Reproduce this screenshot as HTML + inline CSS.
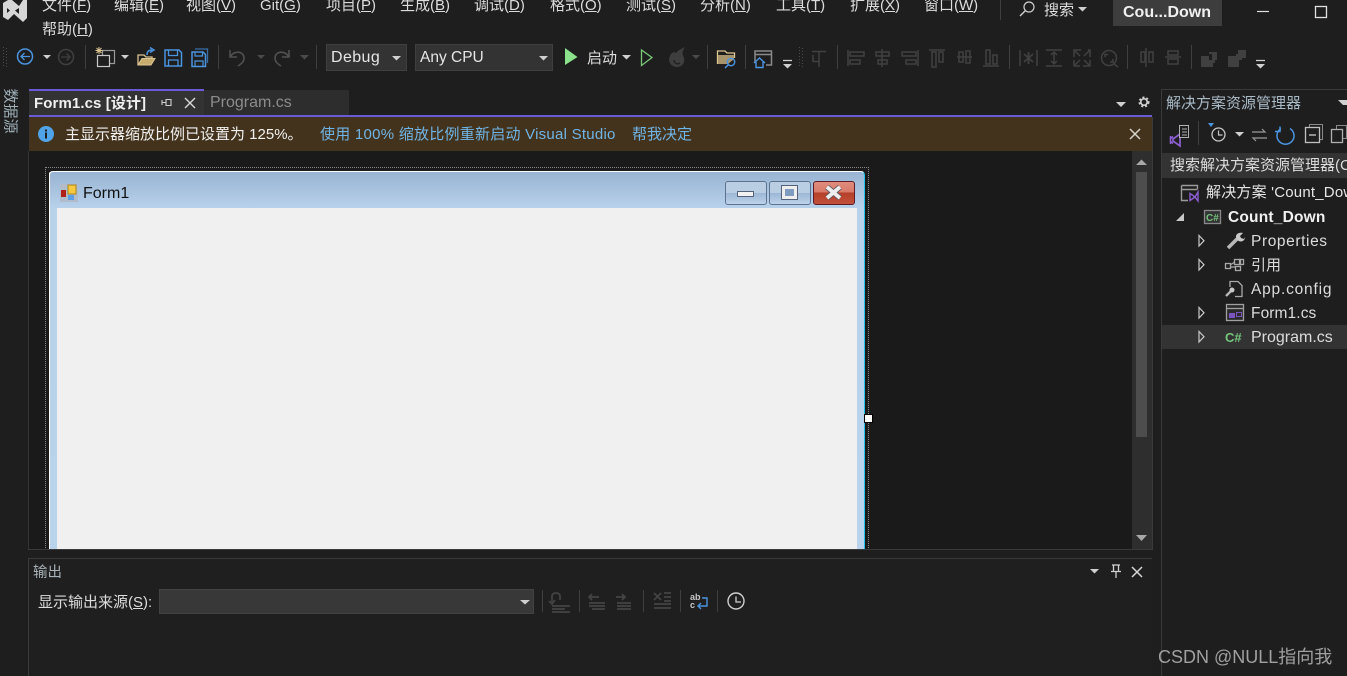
<!DOCTYPE html>
<html><head><meta charset="utf-8">
<style>
html,body{margin:0;padding:0;background:#1e1e1e;width:1347px;height:676px;overflow:hidden}
body{position:relative;font-family:"Liberation Sans","Noto Sans CJK SC",sans-serif;font-size:15px;color:#dcdcdc}
.t{position:absolute;white-space:nowrap;line-height:20px;height:20px}
.b{position:absolute}
u{text-underline-offset:1px}
svg{position:absolute;left:0;top:0}
</style></head><body>

<!-- panels -->
<div class="b" style="left:0;top:0;width:1347px;height:676px;background:#1e1e1e"></div>
<div class="b" style="left:29px;top:151px;width:1103px;height:398px;background:#1a1a1a"></div>
<div class="b" style="left:1132px;top:151px;width:20px;height:398px;background:#2e2e2e"></div>
<div class="b" style="left:1136px;top:172px;width:11px;height:265px;background:#4d4d4d"></div>
<div class="b" style="left:28px;top:151px;width:1px;height:398px;background:#333"></div>
<div class="b" style="left:1152px;top:117px;width:1px;height:433px;background:#3a3a3a"></div>

<!-- tabs -->
<div class="b" style="left:29px;top:89px;width:175px;height:26px;background:#333;border-top:2px solid #6b5ad6;box-sizing:border-box"></div>
<div class="b" style="left:204px;top:90px;width:145px;height:25px;background:#2d2d2d"></div>
<div class="b" style="left:29px;top:115px;width:1123px;height:2px;background:#6b5ad6"></div>
<div class="t" style="left:34px;top:94px;font-weight:bold;color:#f0f0f0;font-size:15px;letter-spacing:.1px">Form1.cs [设计]</div>
<div class="t" style="left:210px;top:93px;color:#8c8c8c;font-size:16px">Program.cs</div>

<!-- info bar -->
<div class="b" style="left:29px;top:117px;width:1123px;height:34px;background:#44331c"></div>
<div class="t" style="left:65px;top:125px;color:#f0f0f0;font-size:15px">主显示器缩放比例已设置为 125%。</div>
<div class="t" style="left:320px;top:125px;color:#6fb4e6;font-size:15px;letter-spacing:.25px">使用 100% 缩放比例重新启动 Visual Studio</div>
<div class="t" style="left:632px;top:125px;color:#6fb4e6;font-size:15px">帮我决定</div>

<!-- form designer -->
<div class="b" style="left:45px;top:167px;width:822px;height:382px;border:1px dotted #8a8a8a;border-bottom:none"></div>
<div class="b" style="left:49px;top:171px;width:816px;height:378px;background:linear-gradient(#98b4d2 0,#b9d2ec 37px,#b9d3ec 100%);border-top:1px solid #fff;border-left:1px solid #fff;border-right:1px solid #1ec1ee;border-radius:4px 4px 0 0;box-sizing:border-box"></div>
<div class="b" style="left:57px;top:208px;width:800px;height:341px;background:#f0f0f0"></div>
<div class="t" style="left:83px;top:184px;color:#111;font-size:16px">Form1</div>
<div class="b" style="left:864px;top:414px;width:7px;height:7px;background:#fff;border:1px solid #000"></div>
<div class="b" style="left:28px;top:549px;width:1125px;height:1px;background:#3a3a3a"></div>

<!-- window buttons -->
<div class="b" style="left:725px;top:181px;width:42px;height:24px;box-sizing:border-box;border:1px solid #5f7390;border-radius:3px;background:linear-gradient(#b9cde3 0,#b9cde3 50%,#9cb6d4 50%,#bcd3ea 100%)"></div>
<div class="b" style="left:737px;top:191px;width:17px;height:6px;background:#f2f2f2;border:1px solid #53627a;box-sizing:border-box"></div>
<div class="b" style="left:769px;top:181px;width:42px;height:24px;box-sizing:border-box;border:1px solid #5f7390;border-radius:3px;background:linear-gradient(#b9cde3 0,#b9cde3 50%,#9cb6d4 50%,#bcd3ea 100%)"></div>
<div class="b" style="left:781px;top:185px;width:17px;height:15px;box-sizing:border-box;background:#7f9cc0;border:4px solid #eee;outline:1px solid #53627a;outline-offset:-1px"></div>
<div class="b" style="left:813px;top:181px;width:42px;height:24px;box-sizing:border-box;border:1px solid #5c1c28;border-radius:3px;background:linear-gradient(#e08c7c 0,#d97b6b 45%,#b5402a 50%,#c2503a 100%)"></div>

<!-- menu -->
<div class="t" style="left:42px;top:-4px">文件(<u>F</u>)</div>
<div class="t" style="left:114px;top:-4px">编辑(<u>E</u>)</div>
<div class="t" style="left:186px;top:-4px">视图(<u>V</u>)</div>
<div class="t" style="left:260px;top:-4px">Git(<u>G</u>)</div>
<div class="t" style="left:326px;top:-4px">项目(<u>P</u>)</div>
<div class="t" style="left:400px;top:-4px">生成(<u>B</u>)</div>
<div class="t" style="left:474px;top:-4px">调试(<u>D</u>)</div>
<div class="t" style="left:550px;top:-4px">格式(<u>O</u>)</div>
<div class="t" style="left:626px;top:-4px">测试(<u>S</u>)</div>
<div class="t" style="left:700px;top:-4px">分析(<u>N</u>)</div>
<div class="t" style="left:776px;top:-4px">工具(<u>T</u>)</div>
<div class="t" style="left:850px;top:-4px">扩展(<u>X</u>)</div>
<div class="t" style="left:924px;top:-4px">窗口(<u>W</u>)</div>
<div class="t" style="left:42px;top:20px">帮助(<u>H</u>)</div>
<div class="t" style="left:1044px;top:1px">搜索</div>
<div class="b" style="left:1113px;top:0;width:109px;height:26px;background:#3d3d3d"></div>
<div class="t" style="left:1123px;top:3px;font-weight:bold;color:#f0f0f0;font-size:16px">Cou...Down</div>

<!-- toolbar combos -->
<div class="b" style="left:326px;top:44px;width:81px;height:27px;box-sizing:border-box;background:#333;border:1px solid #3f3f3f"></div>
<div class="t" style="left:331px;top:48px;font-size:16px;color:#e6e6e6;letter-spacing:.4px">Debug</div>
<div class="b" style="left:415px;top:44px;width:138px;height:27px;box-sizing:border-box;background:#333;border:1px solid #3f3f3f"></div>
<div class="t" style="left:420px;top:48px;font-size:15.500px;color:#e6e6e6">Any CPU</div>
<div class="t" style="left:587px;top:49px;color:#dcdcdc">启动</div>

<!-- left tab -->
<div class="t" style="left:-14px;top:101px;font-size:15px;color:#9fb0b8;transform:rotate(90deg);width:47px;text-align:center">数据源</div>

<!-- solution explorer -->
<div class="b" style="left:1161px;top:89px;width:1px;height:587px;background:#3a3a3a"></div>
<div class="b" style="left:1161px;top:89px;width:186px;height:1px;background:#3a3a3a"></div>
<div class="t" style="left:1166px;top:94px;font-size:15px;color:#a9bac6">解决方案资源管理器</div>
<div class="b" style="left:1162px;top:153px;width:185px;height:25px;background:#333"></div>
<div class="b" style="left:1162px;top:325px;width:185px;height:24px;background:#333"></div>
<div class="b" style="left:1162px;top:150px;width:185px;height:66px;overflow:hidden">
<div class="t" style="left:8px;top:6px;font-size:15px;color:#dcdcdc">搜索解决方案资源管理器(Ctrl+;)</div>
<div class="t" style="left:44px;top:33px;color:#e6e6e6;font-size:15px;letter-spacing:.2px">解决方案 'Count_Down' (1 个项目)</div>
</div>
<div class="t" style="left:1228px;top:208px;color:#f0f0f0;font-weight:bold;font-size:15.500px;letter-spacing:.2px">Count_Down</div>
<div class="t" style="left:1251px;top:232px;color:#dcdcdc;font-size:15.500px;letter-spacing:.6px">Properties</div>
<div class="t" style="left:1251px;top:256px;color:#dcdcdc;font-size:15px">引用</div>
<div class="t" style="left:1251px;top:280px;color:#dcdcdc;font-size:15.500px;letter-spacing:.8px">App.config</div>
<div class="t" style="left:1251px;top:304px;color:#dcdcdc;font-size:15.500px;letter-spacing:.1px">Form1.cs</div>
<div class="t" style="left:1251px;top:328px;color:#dcdcdc;font-size:16px">Program.cs</div>

<!-- output -->
<div class="b" style="left:28px;top:558px;width:1124px;height:118px;background:#1f1f1f;border-top:1px solid #3a3a3a;border-left:1px solid #3a3a3a;box-sizing:border-box"></div>
<div class="t" style="left:33px;top:563px;font-size:14.500px;color:#a6b0b6">输出</div>
<div class="t" style="left:38px;top:593px;font-size:15px;color:#dcdcdc">显示输出来源(<u>S</u>):</div>
<div class="b" style="left:159px;top:589px;width:375px;height:25px;box-sizing:border-box;background:#383838;border:1px solid #424242"></div>
<div class="t" style="left:1158px;top:647px;font-size:18px;color:#a0a0a0">CSDN @NULL指向我</div>

<!-- icons -->
<svg width="1347" height="676" viewBox="0 0 1347 676" fill="none">
<!-- VS logo -->
<path d="M3 3 8 0H12L19 6 23 0H27V18L23 22 14 14 8 20 3 17ZM7 8V13L10 10.500ZM19 8 15 10.500 19 14Z" fill="#d6d6d6" fill-rule="evenodd"/>
<!-- separators -->
<g stroke="#3f3f3f">
<path d="M1000.500 0V20M85.500 45V69M218.500 45V69M316.500 45V69M707.500 45V69M745.500 45V69M837.500 45V69M1009.500 45V69M1127.500 45V69M1191.500 45V69M1198.500 121V145M542.500 590V612M579.500 590V612M643.500 590V612M680.500 590V612M717.500 590V612"/>
</g>
<!-- grips -->
<g stroke="#4a4a4a" stroke-dasharray="1 2"><path d="M3.500 47V68M6.500 48V68M799.500 47V68M802.500 48V68"/></g>
<!-- triangles -->
<g fill="#d0d0d0">
<path d="M1078 7h9l-4.500 4.500zM43 55h8l-4 4zM121 55h8l-4 4zM392 56h9l-4.500 4.500zM539 56h9l-4.500 4.500zM622 55h9l-4.500 4.500zM1116 102h10l-5 5zM1338 100h9v5l-4 0zM1235 132h9l-4.500 4.500zM1090 569h9l-4.500 4.500zM520 600h10l-5 4.500z"/>
<path d="M783 64h9l-4.500 4.500z"/><path d="M783 60.500h9" stroke="#d0d0d0" stroke-width="1.300"/>
<path d="M1256 64h9l-4.500 4.500z"/><path d="M1256 60.500h9" stroke="#d0d0d0" stroke-width="1.300"/>
</g>
<g fill="#4a4a4a"><path d="M257 55h8l-4 4zM300 55h9l-4.500 4.500zM692 55h8l-4 4z"/></g>
<!-- search + window controls -->
<circle cx="1029" cy="7" r="5" stroke="#d0d0d0" stroke-width="1.200"/><path d="M1025 11 1020 16" stroke="#d0d0d0" stroke-width="1.400"/>
<path d="M1257 11.500H1269" stroke="#e0e0e0" stroke-width="1.200"/>
<rect x="1315.500" y="6.500" width="11" height="11" stroke="#e0e0e0" stroke-width="1.300"/>
<!-- back/forward -->
<circle cx="25" cy="56.500" r="7.500" stroke="#4a94e0" stroke-width="1.500"/><path d="M30 56.500H21M24.500 53 21 56.500 24.500 60" stroke="#4a94e0" stroke-width="1.300"/>
<circle cx="66" cy="57" r="7.500" stroke="#3f3f3f" stroke-width="1.500"/><path d="M61 57H70M66.500 53.500 70 57 66.500 60.500" stroke="#3f3f3f" stroke-width="1.300"/>
<!-- new project -->
<rect x="102.500" y="50.500" width="12" height="13" stroke="#9a9a9a" stroke-width="1.200"/>
<rect x="97.500" y="55.500" width="12" height="11" fill="#1e1e1e" stroke="#c8c8c8" stroke-width="1.200"/>
<path d="M99 47V54M95.500 50.500H102.500M96.500 48 101.500 53M101.500 48 96.500 53" stroke="#dcc58f"/>
<!-- open -->
<path d="M138 65V55H144L146 57H152V59" stroke="#dcc58f" stroke-width="1.300"/><path d="M138 65H151L155 58.500H142Z" fill="#c7ac6f" stroke="#dcc58f"/>
<path d="M147 55C147 51 149 50 152 50M150 47.500 154 50 150 52.500" stroke="#4a94e0" stroke-width="1.500"/>
<!-- save -->
<path d="M165 50H179L181.500 52.500V66H165Z" stroke="#4a94e0" stroke-width="1.500"/><path d="M168.500 50V55.500H177.500V50M168.500 66V60H178V66" stroke="#4a94e0" stroke-width="1.300"/>
<path d="M195 49H207.500V63" stroke="#3a6ea6" stroke-width="1.300"/>
<path d="M192 52H203L205.500 54.500V66.500H192Z" stroke="#4a94e0" stroke-width="1.500"/><path d="M195 52V56H202.500V52M195 66.500V61H203V66.500" stroke="#4a94e0" stroke-width="1.200"/>
<!-- undo/redo -->
<path d="M230 50V57H237M230.500 56.500C234 50 244 51 244 58C244 62 241 64 238 66" stroke="#505050" stroke-width="1.600"/>
<path d="M289 50V57H282M288.500 56.500C285 50 275 51 275 58C275 62 278 64 281 66" stroke="#505050" stroke-width="1.600"/>
<!-- play -->
<path d="M565 48 577.500 57 565 65Z" fill="#8ae28a"/>
<path d="M641.500 50V65.500L652 57.500Z" stroke="#78c878" stroke-width="1.300"/>
<!-- flame -->
<path d="M685 47C678 50 677 52 676 53 674 51 671 53 670 56 667 62 672 67 677 67 683 67 685 62 684 58 683 55 681 53 685 47Z" fill="#3e3e3e"/><path d="M674 60C674 63 677 65 680 63" stroke="#222" stroke-width="1.500"/>
<!-- folder search -->
<path d="M717.500 64V51H725L727 53H734.500V58" stroke="#dcc58f" stroke-width="1.300"/><path d="M718 55H734V59L728 64H718Z" fill="#a8946a"/>
<circle cx="731" cy="62" r="3.700" stroke="#4a94e0" stroke-width="1.400"/><path d="M728 65 725 68" stroke="#4a94e0" stroke-width="1.500"/>
<!-- window home -->
<path d="M755 63V51H771.500V65H766M755 54.500H771.500" stroke="#8a8a8a" stroke-width="1.500"/>
<path d="M754 63 759.500 58 765 63M756 62V67.500H763V62" stroke="#4a94e0" stroke-width="1.400"/>
<!-- layout icons disabled -->
<g stroke="#404040" stroke-width="1.500">
<path d="M812 51.500H826M819 51.500V67M813 55V62M813 61.500H819"/>
<path d="M848 50V66M850 52H864V56H850ZM850 60H860V64H850Z"/>
<path d="M882 49V67M876 52H889V56H876ZM878 60H887V64H878Z"/>
<path d="M918 50V66M902 52H916V56H902ZM906 60H916V64H906Z"/>
<path d="M929 50H945M932 52V67H936V52ZM939 52V62H943V52Z"/>
<path d="M957 57H972M959 52H963V62H959ZM966 51H970V63H966Z"/>
<path d="M983 66H999M986 50V64H990V50ZM993 55V64H997V55Z"/>
<path d="M1020 50V66M1037 50V66"/><path d="M1024 54 1033 62M1033 54 1024 62M1028.500 52V64" stroke-width="1.800"/>
<path d="M1046 50H1062M1046 66H1062M1054 52V64M1051 55 1054 52 1057 55M1051 61 1054 64 1057 61"/>
<path d="M1074 57V50H1081M1088 50H1090V57M1090 60V66H1083M1080 66H1074V60M1075 51 1080 56M1089 51 1084 56M1075 65 1080 60M1089 65 1084 60"/>
<circle cx="1109" cy="58" r="7.500"/><path d="M1114 64 1118 67M1105 57V54.500H1108M1113 59V62H1110"/>
<path d="M1146 48V67M1141 52H1145V62H1141ZM1149 52H1153V62H1149Z"/>
<path d="M1165 57H1181M1168 51H1178V55H1168ZM1168 59H1178V64H1168Z"/>
</g>
<g fill="#404040"><path d="M1201 56h8v4h3v-6h-3v-2h8v8h-2v3h-2v4h-12z"/><path d="M1228 56h8v-2h2v-4h8v8h-4v2h-3v7h-11z"/></g>
<!-- tab pin + close -->
<path d="M162 100V105M162 102.500H166M166 99.500H171V105.500H166Z" stroke="#d0d0d0" stroke-width="1.100"/>
<path d="M185 98 195 108M195 98 185 108" stroke="#d8d8d8" stroke-width="1.400"/>
<g stroke="#d0d0d0" stroke-width="2" stroke-dasharray="2 1.900"><circle cx="1144" cy="102" r="4.500"/></g>
<circle cx="1144" cy="102" r="3.200" stroke="#d0d0d0" stroke-width="1.600"/>
<!-- info -->
<circle cx="46" cy="134" r="8" fill="#4fa3e6"/><rect x="45" y="132.500" width="2" height="6" fill="#1e1e1e"/><rect x="45" y="129.500" width="2" height="2" fill="#1e1e1e"/>
<path d="M1130 129 1140 139M1140 129 1130 139" stroke="#d8d4cc" stroke-width="1.500"/>
<!-- scrollbar arrows -->
<path d="M1136 165H1147L1141.500 159.500ZM1136 535H1147L1141.500 541Z" fill="#a8a8a8"/>
<!-- form icon -->
<rect x="60" y="184" width="18" height="18" fill="#b0bccb"/>
<rect x="61" y="190" width="5" height="7" fill="#b0201a"/><rect x="68" y="185" width="8" height="9" fill="#f7c93f" stroke="#a8851c"/><rect x="68" y="195" width="6" height="5" fill="#5a9ee8"/>
<!-- close X on form -->
<path d="M827 187 840 198M840 187 827 198" stroke="#5a5560" stroke-width="5.500"/>
<path d="M827 187 840 198M840 187 827 198" stroke="#eeeeee" stroke-width="3.800"/>
<!-- corners -->
<path d="M49.500 175V173L52 171.500" stroke="#fff"/>
<!-- SE toolbar -->
<path d="M1173 139 1180 134V146L1173 141ZM1170 139 1173 136.500M1170 141 1173 143.500" stroke="#8d5fd3" stroke-width="1.700"/><path d="M1170.500 136V144" stroke="#8d5fd3" stroke-width="1.500"/>
<rect x="1179.500" y="125.500" width="9" height="12" stroke="#b0b0b0" fill="#1e1e1e"/><path d="M1182 129H1187M1182 132H1187M1182 135H1187" stroke="#b0b0b0"/>
<path d="M1208 123h6l-3 4z" fill="#4a94e0"/><circle cx="1218.500" cy="134.500" r="6.500" stroke="#c8c8c8" stroke-width="1.300"/><path d="M1218.500 130.500V135H1222.500" stroke="#c8c8c8" stroke-width="1.200"/>
<path d="M1252 132H1265L1262 129M1267 138H1253L1256 141" stroke="#9a9a9a" stroke-width="1.200"/>
<path d="M1281 128.500A8.500 8.500 0 1 0 1290 128.500M1280 126.500V131.500H1275" stroke="#4a94e0" stroke-width="1.500"/>
<rect x="1309.500" y="124.500" width="13" height="15" stroke="#8a8a8a"/><rect x="1305.500" y="127.500" width="14" height="15" fill="#1e1e1e" stroke="#c0c0c0" stroke-width="1.300"/><path d="M1309 135H1316" stroke="#c0c0c0" stroke-width="1.400"/>
<rect x="1336.500" y="125.500" width="10" height="13" stroke="#8a8a8a"/><rect x="1331.500" y="129.500" width="11" height="13" fill="#1e1e1e" stroke="#b0b0b0" stroke-width="1.300"/>
<!-- tree -->
<path d="M1181.500 185.500H1197.500V189M1181.500 185.500V200.500H1188M1181.500 189.500H1197.500" stroke="#9a9a9a" stroke-width="1.400"/>
<path d="M1190 193.500 1195 197 1198 192V201L1195 197 1190 200.500Z" stroke="#8d5fd3" stroke-width="1.400"/>
<path d="M1176 221H1184V213Z" fill="#c8c8c8"/>
<rect x="1204.500" y="210.500" width="16" height="13" fill="#333" stroke="#8a8a8a" stroke-width="1.300"/><text x="1206" y="221" font-family="Liberation Sans" font-size="10" font-weight="bold" fill="#74c47c">C#</text>
<path d="M1199 235.500V246L1204 240.700ZM1199 259.500V270L1204 264.700ZM1199 307.500V318L1204 312.700ZM1199 331.500V342L1204 336.700Z" stroke="#c8c8c8" stroke-width="1.200"/>
<!-- wrench -->
<path d="M1228 248 1237 239" stroke="#b8b8b8" stroke-width="3.500"/><path d="M1237 240C1234 235 1238 232 1243 233L1240 236 1241 238 1244 239 1245 237C1245 241 1241 243 1237 240Z" fill="#c8c8c8"/>
<!-- references -->
<g stroke="#a8a8a8" stroke-width="1.300"><rect x="1225.500" y="263.500" width="5" height="5"/><rect x="1234.500" y="259.500" width="6" height="5"/><rect x="1235.500" y="266.500" width="5" height="4"/><rect x="1239.500" y="259.500" width="4" height="5"/><path d="M1230 265 1235 262M1231 267H1235"/></g>
<!-- app config -->
<path d="M1230 287V281.500H1238L1242 285.500V296.500H1235" stroke="#a8a8a8" stroke-width="1.300"/><path d="M1226 296 1232 290" stroke="#b8b8b8" stroke-width="2.300"/><circle cx="1232" cy="290" r="2.500" fill="#c8c8c8"/>
<!-- form1 -->
<rect x="1226.500" y="304.500" width="17" height="16" stroke="#a0a0a0" stroke-width="1.300" fill="#2a2a2a"/><path d="M1227 308.500H1243" stroke="#a0a0a0" stroke-width="1.300"/><rect x="1229" y="313" width="6" height="5" fill="#7a55c0"/><rect x="1236.500" y="312.500" width="5" height="4" stroke="#7a55c0"/>
<text x="1225" y="342" font-family="Liberation Sans" font-size="13" font-weight="bold" fill="#74c47c">C#</text>
<!-- output toolbar -->
<path d="M1112 565H1120M1113.500 565V571.500H1118.500V565M1111 571.500H1121M1116 571.500V578" stroke="#d0d0d0" stroke-width="1.300"/>
<path d="M1132 567 1142 577M1142 567 1132 577" stroke="#d8d8d8" stroke-width="1.500"/>
<g stroke="#444" stroke-width="1.700">
<path d="M552 602V596C552 592 560 592 560 596V600M552 606H570M552 609H565M552 612H570M555 600 552 604 549 601"/>
<path d="M589 597H599M592 594 589 597 592 600M589 603H605M589 606H605M592 609H605M616 597H625M622 594 625 597 622 600M617 603H631M617 606H631M617 609H631"/>
<path d="M654 593 661 600M661 593 654 600M664 593H671M664 597H671M664 601H671M654 604H671M654 608H671"/>
</g>
<text x="690" y="600" font-family="Liberation Sans" font-size="9" font-weight="bold" fill="#c8c8c8">ab</text>
<text x="690" y="608" font-family="Liberation Sans" font-size="9" font-weight="bold" fill="#c8c8c8">c</text>
<path d="M702 598H707V606H698M701 603 698 606 701 609" stroke="#4a94e0" stroke-width="1.400"/>
<circle cx="736" cy="601" r="8" stroke="#d0d0d0" stroke-width="1.400"/><path d="M736 596.500V602H741" stroke="#d0d0d0" stroke-width="1.300"/>
</svg>
</body></html>
